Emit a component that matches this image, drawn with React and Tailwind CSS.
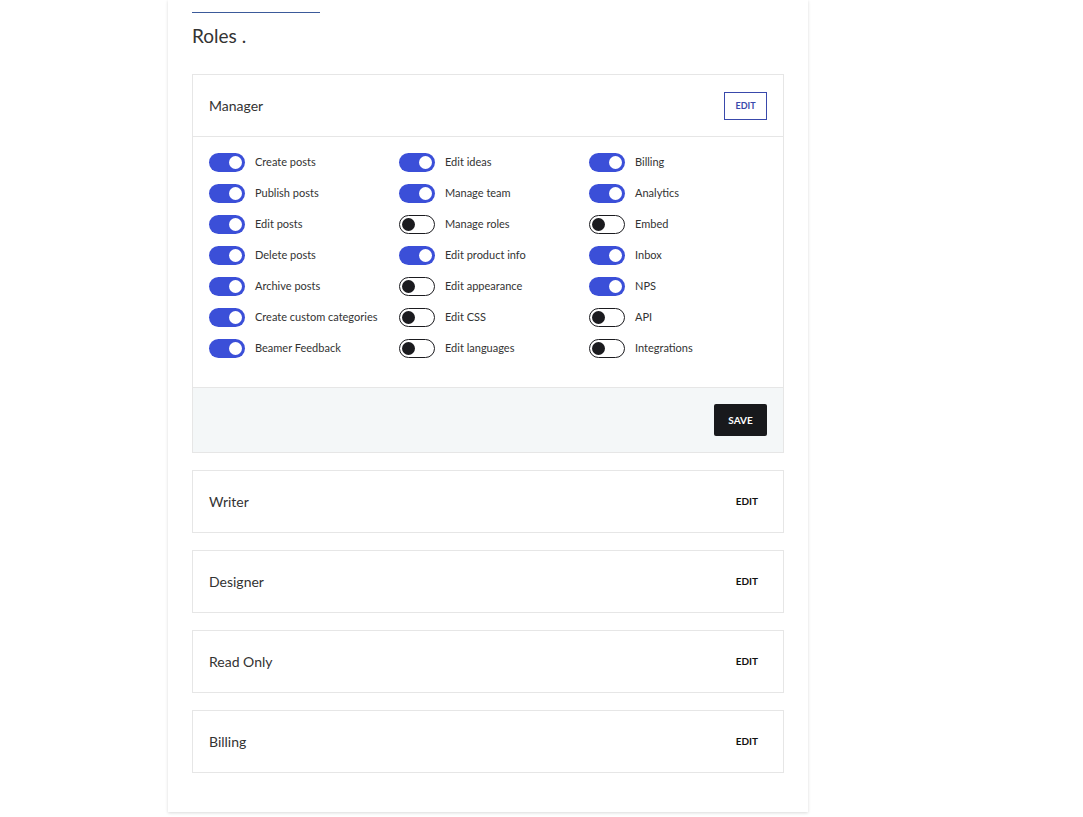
const cols = [
  [["Create posts", 1], ["Publish posts", 1], ["Edit posts", 1], ["Delete posts", 1], ["Archive posts", 1], ["Create custom categories", 1], ["Beamer Feedback", 1]],
  [["Edit ideas", 1], ["Manage team", 1], ["Manage roles", 0], ["Edit product info", 1], ["Edit appearance", 0], ["Edit CSS", 0], ["Edit languages", 0]],
  [["Billing", 1], ["Analytics", 1], ["Embed", 0], ["Inbox", 1], ["NPS", 1], ["API", 0], ["Integrations", 0]],
];

function Toggle({ on }) {
  return on ? (
    <div className="w-[36px] h-[19px] rounded-full bg-[#3b4fd8] flex items-center justify-end px-[3px]">
      <div className="w-[13px] h-[13px] rounded-full bg-white" />
    </div>
  ) : (
    <div className="w-[36px] h-[19px] rounded-full border border-[#1b1b1f] bg-white flex items-center px-[2px]">
      <div className="w-[13px] h-[13px] rounded-full bg-[#1b1b1f]" />
    </div>
  );
}

function Role({ name }) {
  return (
    <div className="border border-[#e6e6e6] h-[63px] flex items-center justify-between pl-[16px] pr-[25px]">
      <span className="text-[14px] text-[#333]">{name}</span>
      <span className="text-[10px] font-bold text-[#111]">EDIT</span>
    </div>
  );
}

export default function App() {
  return (
    <div className="min-h-[817px] bg-white" style={{ fontFamily: "Lato, 'Open Sans', sans-serif" }}>
      <div className="ml-[168px] w-[640px] h-[812px] bg-white shadow-[0_1px_3px_rgba(0,0,0,0.15)] px-[24px] pt-[12px]">
        <div className="w-[128px] h-[1px] bg-[#3b5a9a]" />
        <h1 className="text-[19px] text-[#333] mt-[11px] leading-[24px]">Roles .</h1>
        <div className="mt-[26px] border border-[#e6e6e6]">
          <div className="h-[62px] flex items-center justify-between pl-[16px] pr-[16px] border-b border-[#e6e6e6]">
            <span className="text-[14px] text-[#333]">Manager</span>
            <span className="w-[43px] h-[28px] border border-[#3949ab] text-[#3949ab] text-[9px] font-bold flex items-center justify-center">EDIT</span>
          </div>
          <div className="flex pl-[16px] pt-[16px] pb-[29px]">
            {cols.map((c, i) => (
              <div key={i} className="w-[190px] flex flex-col gap-[12px]">
                {c.map(([l, on]) => (
                  <div key={l} className="flex items-center gap-[10px] h-[19px]">
                    <Toggle on={on} />
                    <span className="text-[11px] text-[#333]">{l}</span>
                  </div>
                ))}
              </div>
            ))}
          </div>
          <div className="h-[65px] bg-[#f4f7f8] border-t border-[#e6e6e6] flex items-center justify-end pr-[16px]">
            <span className="w-[53px] h-[32px] bg-[#18191c] text-white text-[10px] font-bold flex items-center justify-center rounded-[2px]">SAVE</span>
          </div>
        </div>
        <div className="mt-[17px] flex flex-col gap-[17px]">
          {["Writer", "Designer", "Read Only", "Billing"].map((n) => <Role key={n} name={n} />)}
        </div>
      </div>
    </div>
  );
}
